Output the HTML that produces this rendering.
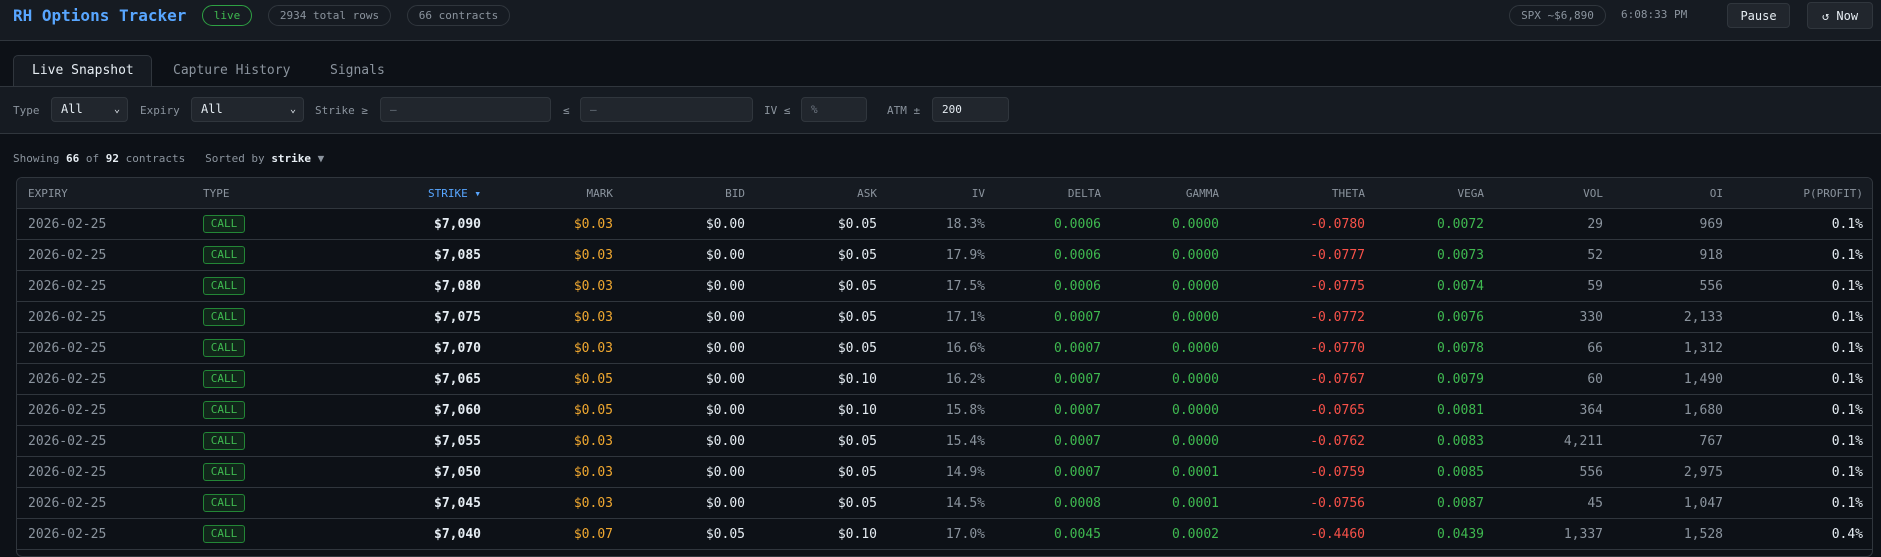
<!DOCTYPE html>
<html><head><meta charset="utf-8"><style>
*{margin:0;padding:0;box-sizing:border-box}
body{width:1881px;height:551px;overflow:hidden;background:#0d1117;font-family:"DejaVu Sans Mono","Liberation Mono",monospace;color:#8b949e;position:relative}
.a{position:absolute;white-space:nowrap}
.hdr{left:0;top:0;width:1881px;height:41px;background:#161b22;border-bottom:1px solid #30363d}
.pill{position:absolute;border:1px solid #30363d;border-radius:11px;font-size:11px;color:#8b949e;display:flex;align-items:center;justify-content:center;height:21px;top:5px}
.btn{position:absolute;border:1px solid #30363d;border-radius:4px;background:#21262d;color:#e6edf3;font-size:12px;display:flex;align-items:center;justify-content:center}
.filter{left:0;top:86px;width:1881px;height:48px;background:#161b22;border-top:1px solid #30363d;border-bottom:1px solid #30363d}
.lbl{position:absolute;top:104px;font-size:11px;color:#8b949e}
.inp{position:absolute;top:97px;height:25px;background:#21262d;border:1px solid #30363d;border-radius:4px;font-size:11px;color:#6e7681;padding-left:9px;line-height:23px}
.table{left:16px;top:177px;width:1857px;height:380px;border:1px solid #30363d;border-radius:6px;background:#0d1117;overflow:hidden}
.th{position:absolute;left:0;top:0;width:1857px;height:31px;background:#161b22;border-bottom:1px solid #30363d}
.row{position:absolute;left:0;width:1857px;height:31px;border-bottom:1px solid #30363d}
.c{position:absolute;top:8px;font-size:13px;line-height:15px;white-space:nowrap}
.h{position:absolute;top:9px;font-size:11px;line-height:13px;color:#8b949e}
.r{text-align:right}
.w{color:#e6edf3}.o{color:#f0a830}.g{color:#3fb950}.red{color:#f85149}
.call{position:absolute;left:186px;top:6px;width:42px;height:18px;border:1px solid #238636;background:#11261a;border-radius:3px;color:#3fb950;font-size:11px;text-align:center;line-height:16px}
</style></head><body>
<div class="a hdr"></div>
<div class="a" style="left:13px;top:6px;font-size:16px;font-weight:bold;color:#58a6ff">RH Options Tracker</div>
<div class="pill" style="left:202px;width:50px;border-color:#2ea043;color:#3fb950">live</div>
<div class="pill" style="left:268px;width:123px">2934 total rows</div>
<div class="pill" style="left:407px;width:103px">66 contracts</div>
<div class="pill" style="left:1509px;width:97px">SPX ~$6,890</div>
<div class="a" style="left:1621px;top:8px;font-size:11px;color:#8b949e">6:08:33 PM</div>
<div class="btn" style="left:1727px;top:3px;width:63px;height:25px">Pause</div>
<div class="btn" style="left:1807px;top:2px;width:66px;height:27px">↺ Now</div>

<div class="a" style="left:13px;top:55px;width:139px;height:32px;background:#161b22;border:1px solid #30363d;border-bottom:none;border-radius:5px 5px 0 0"></div>
<div class="a" style="left:32px;top:63px;font-size:13px;color:#e6edf3">Live Snapshot</div>
<div class="a" style="left:173px;top:63px;font-size:13px;color:#8b949e">Capture History</div>
<div class="a" style="left:330px;top:63px;font-size:13px;color:#8b949e">Signals</div>

<div class="a filter"></div>
<div class="lbl" style="left:13px">Type</div>
<div class="inp" style="left:51px;width:77px;color:#e6edf3;font-size:12px">All<span style="position:absolute;right:7px;font-size:10px">⌄</span></div>
<div class="lbl" style="left:140px">Expiry</div>
<div class="inp" style="left:191px;width:113px;color:#e6edf3;font-size:12px">All<span style="position:absolute;right:7px;font-size:10px">⌄</span></div>
<div class="lbl" style="left:315px">Strike ≥</div>
<div class="inp" style="left:380px;width:171px">–</div>
<div class="lbl" style="left:563px">≤</div>
<div class="inp" style="left:580px;width:173px">–</div>
<div class="lbl" style="left:764px">IV ≤</div>
<div class="inp" style="left:801px;width:66px">%</div>
<div class="lbl" style="left:887px">ATM ±</div>
<div class="inp" style="left:932px;width:77px;color:#e6edf3">200</div>

<div class="a" style="left:13px;top:152px;font-size:11px;color:#8b949e">Showing <b style="color:#e6edf3">66</b> of <b style="color:#e6edf3">92</b> contracts &nbsp; Sorted by <b style="color:#e6edf3">strike</b> ▼</div>

<div class="a table">
<div class="th">
<span class="h" style="left:11px">EXPIRY</span>
<span class="h" style="left:186px">TYPE</span>
<span class="h" style="right:1393px;color:#58a6ff">STRIKE ▾</span>
<span class="h" style="right:1261px">MARK</span>
<span class="h" style="right:1129px">BID</span>
<span class="h" style="right:997px">ASK</span>
<span class="h" style="right:889px">IV</span>
<span class="h" style="right:773px">DELTA</span>
<span class="h" style="right:655px">GAMMA</span>
<span class="h" style="right:509px">THETA</span>
<span class="h" style="right:390px">VEGA</span>
<span class="h" style="right:271px">VOL</span>
<span class="h" style="right:151px">OI</span>
<span class="h" style="right:11px">P(PROFIT)</span>
</div>
<div id="rows"></div>
</div>
<script>
var d=[["7,090","0.03","0.00","0.05","18.3","0.0006","0.0000","0.0780","0.0072","29","969","0.1"],
["7,085","0.03","0.00","0.05","17.9","0.0006","0.0000","0.0777","0.0073","52","918","0.1"],
["7,080","0.03","0.00","0.05","17.5","0.0006","0.0000","0.0775","0.0074","59","556","0.1"],
["7,075","0.03","0.00","0.05","17.1","0.0007","0.0000","0.0772","0.0076","330","2,133","0.1"],
["7,070","0.03","0.00","0.05","16.6","0.0007","0.0000","0.0770","0.0078","66","1,312","0.1"],
["7,065","0.05","0.00","0.10","16.2","0.0007","0.0000","0.0767","0.0079","60","1,490","0.1"],
["7,060","0.05","0.00","0.10","15.8","0.0007","0.0000","0.0765","0.0081","364","1,680","0.1"],
["7,055","0.03","0.00","0.05","15.4","0.0007","0.0000","0.0762","0.0083","4,211","767","0.1"],
["7,050","0.03","0.00","0.05","14.9","0.0007","0.0001","0.0759","0.0085","556","2,975","0.1"],
["7,045","0.03","0.00","0.05","14.5","0.0008","0.0001","0.0756","0.0087","45","1,047","0.1"],
["7,040","0.07","0.05","0.10","17.0","0.0045","0.0002","0.4460","0.0439","1,337","1,528","0.4"]];
var h="";
d.forEach(function(r,i){
h+='<div class="row" style="top:'+(31+i*31)+'px">'+
'<span class="c" style="left:11px">2026-02-25</span><span class="call">CALL</span>'+
'<span class="c w" style="right:1393px;font-weight:bold">$'+r[0]+'</span>'+
'<span class="c o" style="right:1261px">$'+r[1]+'</span>'+
'<span class="c w" style="right:1129px">$'+r[2]+'</span>'+
'<span class="c w" style="right:997px">$'+r[3]+'</span>'+
'<span class="c" style="right:889px">'+r[4]+'%</span>'+
'<span class="c g" style="right:773px">'+r[5]+'</span>'+
'<span class="c g" style="right:655px">'+r[6]+'</span>'+
'<span class="c red" style="right:509px">-'+r[7]+'</span>'+
'<span class="c g" style="right:390px">'+r[8]+'</span>'+
'<span class="c" style="right:271px">'+r[9]+'</span>'+
'<span class="c" style="right:151px">'+r[10]+'</span>'+
'<span class="c w" style="right:11px">'+r[11]+'%</span></div>';});
document.getElementById("rows").innerHTML=h;
</script>
</body></html>
